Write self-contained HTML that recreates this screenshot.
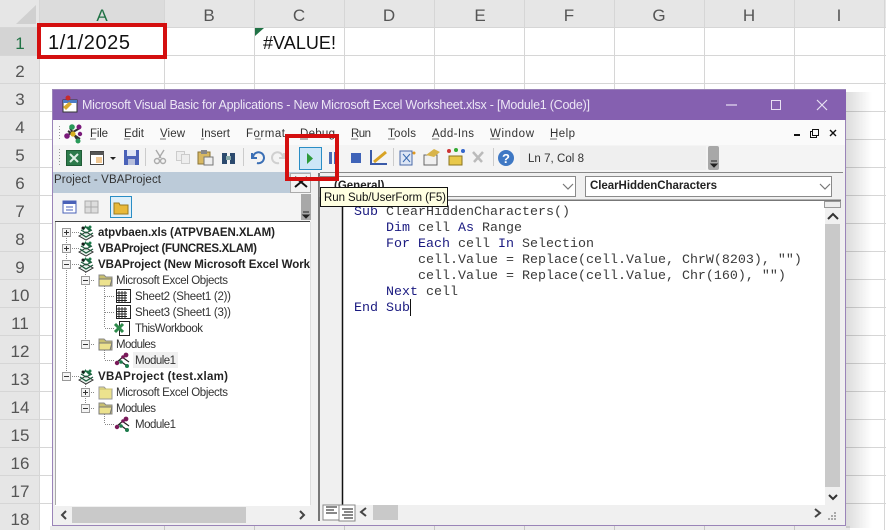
<!DOCTYPE html>
<html><head><meta charset="utf-8"><style>
html,body{margin:0;padding:0;background:#fff;width:886px;height:530px;overflow:hidden}
svg{display:block}
.s{font-family:"Liberation Sans",sans-serif;font-size:11.500px;fill:#333}
.b{font-family:"Liberation Sans",sans-serif;font-size:11.500px;font-weight:bold;fill:#222}
.m{font-family:"Liberation Mono",monospace;font-size:13.33px;fill:#3a3a3a;white-space:pre}
.k{fill:#1a1a80}
.h{font-family:"Liberation Sans",sans-serif;font-size:17px;fill:#555;text-anchor:middle}
</style></head><body>
<svg width="886" height="530" viewBox="0 0 886 530" xmlns="http://www.w3.org/2000/svg">
<defs>
<linearGradient id="sh" x1="0" x2="1" y1="0" y2="0"><stop offset="0" stop-color="#000" stop-opacity=".14"/><stop offset="1" stop-color="#000" stop-opacity="0"/></linearGradient>
<g id="pj"><path d="M1 12l7-4 7 4-7 4z" fill="#e8f2ec" stroke="#333"/><path d="M2 9l6 4 7-4M3 6l5 3 6-3" fill="none" stroke="#1c5a3c" stroke-width="1.200"/><path d="M5 6l3-4M9 3l4 3M7 2l5 5" stroke="#1c6a42" stroke-width="1.500" fill="none"/><circle cx="5" cy="4" r="1.500" fill="#1a1a1a"/><circle cx="12" cy="3" r="1.500" fill="#1c7a4a"/></g>
<g id="mod"><path d="M2 11l8-7M5 8l8 6M8 5l7 5" stroke="#222" stroke-width="1.200" fill="none"/><circle cx="3" cy="11" r="2.200" fill="#7a1a5a"/><circle cx="12" cy="3" r="2.400" fill="#7a1a5a"/><circle cx="9" cy="5" r="1.800" fill="#7a1a5a"/><circle cx="13" cy="14" r="2" fill="#1c7a4a"/><circle cx="7" cy="10" r="1.800" fill="#1c7a4a"/></g>
<g id="fo"><path d="M1 3h5l2 2h6v9H1z" fill="#c9c070" stroke="#888"/><path d="M1 7h13l-2 7H1z" fill="#ece28e" stroke="#777"/></g>
<g id="fc"><path d="M1 3h5l2 2h6v10H1z" fill="#ece28e" stroke="#999"/><path d="M1 5h13" stroke="#c9c070"/></g>
<g id="sh2"><rect x=".5" y=".5" width="14" height="13" fill="#fff" stroke="#222"/><path d="M0 4h11M0 6.500h11M0 9h11M0 11.500h11M3 2v11M6 2v11M9 2v11" stroke="#222" stroke-width=".9"/></g>
<g id="plus"><rect x=".5" y=".5" width="8" height="8" fill="#f4f4f4" stroke="#999"/><path d="M2 4.500h5M4.500 2v5" stroke="#333"/></g>
<g id="minus"><rect x=".5" y=".5" width="8" height="8" fill="#f4f4f4" stroke="#999"/><path d="M2 4.500h5" stroke="#333"/></g>
</defs>

<!-- excel sheet -->
<rect width="886" height="530" fill="#fff"/>
<rect width="886" height="27" fill="#e6e6e6"/>
<rect width="39" height="530" fill="#e6e6e6"/>
<rect x="39" width="125" height="27" fill="#dcdcdc"/>
<rect y="27" width="39" height="28" fill="#d4d4d4"/>
<path d="M16 24L36 5v19z" fill="#d0d0d0"/>
<g stroke="#d6d6d6">
<path d="M39.500 0V530M164.500 0V530M254.500 0V530M344.500 0V530M434.500 0V530M524.500 0V530M614.500 0V530M704.500 0V530M794.500 0V530M884.500 0V530"/>
<path d="M0 27.500H886M0 55.500H886M0 83.500H886M0 111.500H886M0 139.500H886M0 167.500H886M0 195.500H886M0 223.500H886M0 251.500H886M0 279.500H886M0 307.500H886M0 335.500H886M0 363.500H886M0 391.500H886M0 419.500H886M0 447.500H886M0 475.500H886M0 503.500H886"/>
</g>
<g class="h">
<text class="h" x="102" y="21" style="fill:#217346">A</text><text class="h" x="209" y="21">B</text><text class="h" x="299" y="21">C</text><text class="h" x="389" y="21">D</text><text class="h" x="480" y="21">E</text><text class="h" x="569" y="21">F</text><text class="h" x="659" y="21">G</text><text class="h" x="749" y="21">H</text><text class="h" x="839" y="21">I</text>
<text class="h" x="20" y="49" style="fill:#217346">1</text><text class="h" x="20" y="77">2</text><text class="h" x="20" y="105">3</text><text class="h" x="20" y="133">4</text><text class="h" x="20" y="161">5</text><text class="h" x="20" y="189">6</text><text class="h" x="20" y="217">7</text><text class="h" x="20" y="245">8</text><text class="h" x="20" y="273">9</text><text class="h" x="20" y="301">10</text><text class="h" x="20" y="329">11</text><text class="h" x="20" y="357">12</text><text class="h" x="20" y="385">13</text><text class="h" x="20" y="413">14</text><text class="h" x="20" y="441">15</text><text class="h" x="20" y="469">16</text><text class="h" x="20" y="497">17</text><text class="h" x="20" y="525">18</text>
</g>
<rect x="39" y="27" width="125" height="28" fill="#fff"/>
<text x="48" y="49" textLength="82" font-family="Liberation Sans" font-size="20" fill="#111">1/1/2025</text>
<text x="263" y="49" textLength="73" font-family="Liberation Sans" font-size="18" fill="#111">#VALUE!</text>
<path d="M255 28h9l-9 8z" fill="#217346"/>
<rect x="39" y="25" width="126" height="32" fill="none" stroke="#d40f0f" stroke-width="4"/>

<!-- window -->
<rect x="846" y="92" width="26" height="436" fill="url(#sh)"/>
<rect x="50" y="526" width="800" height="4" fill="#000" opacity=".08"/>
<rect x="52.500" y="89.500" width="793" height="436" fill="#f0f0f0" stroke="#9a84b8"/>
<rect x="53" y="90" width="793" height="30" fill="#8560b0"/>
<rect x="63" y="100" width="14" height="12" fill="#fff" stroke="#333"/>
<rect x="63" y="100" width="14" height="3" fill="#4d7cc4"/>
<path d="M63 107l6-5 3 2-6 6z" fill="#d9a92c"/><circle cx="68" cy="98" r="2.500" fill="#c92a2a"/>
<text x="82" y="109" textLength="508" font-family="Liberation Sans" font-size="12.500" fill="#ece6f5">Microsoft Visual Basic for Applications - New Microsoft Excel Worksheet.xlsx - [Module1 (Code)]</text>
<path d="M726 105h11" stroke="#e8e0f2" stroke-width="1.200"/>
<rect x="771.500" y="100.500" width="9" height="9" fill="none" stroke="#e8e0f2"/>
<path d="M817 100l10 10M827 100l-10 10" stroke="#e8e0f2" stroke-width="1.200"/>

<!-- menu -->
<rect x="53" y="120" width="792" height="25" fill="#fafafa"/>
<path d="M59.500 126v13" stroke="#999" stroke-dasharray="1 2"/>
<g stroke-width="2"><path d="M66 136l14-8M70 128l8 13M68 131l12 8" stroke="#333" fill="none"/></g>
<circle cx="67" cy="136" r="2.800" fill="#7a1a7a"/><circle cx="72" cy="127" r="2.800" fill="#2a9a5a"/><circle cx="79" cy="127" r="2.500" fill="#7a1a7a"/><circle cx="73" cy="134" r="2.600" fill="#d8b020"/><circle cx="78" cy="141" r="2.500" fill="#2a9a5a"/><circle cx="80" cy="134" r="2.200" fill="#7a1a7a"/>
<g>
<text class="s" x="90" y="137" textLength="18">File</text><text class="s" x="124" y="137" textLength="20">Edit</text><text class="s" x="160" y="137" textLength="25">View</text><text class="s" x="201" y="137" textLength="29">Insert</text><text class="s" x="246" y="137" textLength="39">Format</text><text class="s" x="300" y="137" textLength="35">Debug</text><text class="s" x="351" y="137" textLength="20">Run</text><text class="s" x="388" y="137" textLength="28">Tools</text><text class="s" x="432" y="137" textLength="42">Add-Ins</text><text class="s" x="490" y="137" textLength="44">Window</text><text class="s" x="550" y="137" textLength="25">Help</text>
</g>
<path d="M90 139h6M124 139h6M160 139h6M201 139h3M255 139h6M300 139h8M351 139h7M388 139h7M432 139h7M490 139h10M550 139h7" stroke="#444" stroke-width=".8"/>
<rect x="794" y="134" width="6" height="2" fill="#111"/>
<rect x="810.500" y="131.500" width="6" height="6" fill="none" stroke="#111"/><rect x="812.500" y="129.500" width="6" height="6" fill="#fafafa" stroke="#111"/>
<path d="M830 130l6 6M836 130l-6 6" stroke="#111" stroke-width="1.400"/>

<!-- toolbar -->
<rect x="53" y="145" width="792" height="27" fill="#f4f4f4"/>
<path d="M59.500 149v17" stroke="#999" stroke-dasharray="1 2"/>
<rect x="66.500" y="150.500" width="15" height="15" fill="#2d7a4b" stroke="#1f5c36"/>
<path d="M70 154l8 8M78 154l-8 8" stroke="#dff0e5" stroke-width="2"/>
<rect x="90.500" y="151.500" width="13" height="13" fill="#fff" stroke="#444"/><rect x="91" y="152" width="13" height="3" fill="#555"/><path d="M96 158h6M96 160h6M96 162h6" stroke="#e0912a"/>
<path d="M110 157h6l-3 3z" fill="#222"/>
<rect x="124" y="150" width="15" height="15" fill="#4a62b8"/><rect x="127" y="150" width="9" height="6" fill="#dfe6f5"/><rect x="128" y="159" width="7" height="6" fill="#b6bedb"/>
<path d="M145.500 148v18M243.500 148v18M288.500 148v18M393.500 148v18M493.500 148v18" stroke="#ccc"/>
<path d="M156 150l5 8M164 150l-5 8" stroke="#aaa" stroke-width="1.400"/><circle cx="157" cy="161" r="2.500" fill="none" stroke="#aaa" stroke-width="1.400"/><circle cx="163" cy="161" r="2.500" fill="none" stroke="#aaa" stroke-width="1.400"/>
<rect x="176.500" y="151.500" width="8" height="9" fill="#eee" stroke="#ccc"/><rect x="181.500" y="154.500" width="8" height="9" fill="#eee" stroke="#ccc"/>
<rect x="198" y="152" width="12" height="12" fill="#d8b862" stroke="#8a7436"/><rect x="201" y="150" width="6" height="4" fill="#888"/><rect x="204" y="157" width="9" height="8" fill="#eee" stroke="#777"/>
<rect x="222" y="153" width="5" height="11" fill="#2c4a6e"/><rect x="230" y="153" width="5" height="11" fill="#2c4a6e"/><rect x="226" y="156" width="5" height="4" fill="#8aa"/>
<path d="M253 158a5.500 5.500 0 1 1 4 5M252 153v5h5" fill="none" stroke="#3b6fb5" stroke-width="2"/>
<path d="M283 158a5.500 5.500 0 1 0-4 5M284 153v5h-5" fill="none" stroke="#d0d0d0" stroke-width="2"/>
<rect x="299.500" y="147.500" width="22" height="22" fill="#cde6f7" stroke="#2a8dc5"/>
<path d="M307 153l6 5.500-6 5.500z" fill="#2d9a3a"/>
<rect x="329" y="152" width="3" height="12" fill="#4a6db5"/><rect x="334" y="152" width="3" height="12" fill="#4a6db5"/>
<rect x="351" y="153" width="10" height="10" fill="#3f63b8"/>
<path d="M371 150v14h16" fill="none" stroke="#3a5aa8" stroke-width="2"/><path d="M374 162l12-10" stroke="#d8a324" stroke-width="3"/>
<rect x="400" y="151" width="12" height="14" fill="#dde6f5" stroke="#4a6aa8"/><path d="M403 154l7 8M410 154l-7 8" stroke="#3a6ab0"/><circle cx="414" cy="153" r="1.500" fill="#e29a20"/>
<rect x="424" y="155" width="13" height="10" fill="#f0f0f0" stroke="#666"/><path d="M426 155l8-6 6 3-6 5z" fill="#d8b44a"/>
<rect x="449" y="156" width="13" height="9" fill="#e8c84a" stroke="#8a7420"/><circle cx="449" cy="151" r="2" fill="#c33"/><circle cx="456" cy="150" r="2" fill="#3a3"/><circle cx="463" cy="151" r="2" fill="#36c"/>
<path d="M473 152l9 10M483 152l-9 10" stroke="#bbb" stroke-width="2.500"/>
<circle cx="506" cy="158" r="8" fill="#3f78c4"/><text x="506" y="163" text-anchor="middle" font-family="Liberation Sans" font-size="13" font-weight="bold" fill="#fff">?</text>
<rect x="520" y="146" width="186" height="24" fill="#efefef"/>
<text x="528" y="162" class="s" textLength="56">Ln 7, Col 8</text>
<rect x="708" y="146" width="11" height="24" rx="2" fill="#a8a8a8"/>
<path d="M711 161h6M711 164h6l-3 3z" stroke="#222" fill="#222"/>
<path d="M53 172.500H843" stroke="#888"/>

<!-- project pane -->
<rect x="53" y="172" width="258" height="21" fill="#bccbd9"/>
<text x="54" y="183" class="s" textLength="107">Project - VBAProject</text>
<rect x="290.500" y="173.500" width="20" height="19" fill="#f2f2f2" stroke="#aaa"/>
<path d="M295 177l12 10M307 177l-12 10" stroke="#111" stroke-width="2"/>
<rect x="53" y="193" width="258" height="28" fill="#f4f4f4"/>
<rect x="63" y="201" width="13" height="12" fill="#fff" stroke="#4a62b8"/><rect x="63" y="201" width="13" height="3" fill="#4a62b8"/><path d="M66 207h7M66 210h7" stroke="#4a62b8"/>
<rect x="85" y="201" width="13" height="12" fill="#ddd" stroke="#aaa"/><path d="M85 207h13M91 201v12" stroke="#aaa"/>
<rect x="110.500" y="196.500" width="21" height="21" fill="#dff0fa" stroke="#2a8dc5"/>
<path d="M114 203h5l1 2h8v9h-14z" fill="#e8b93a" stroke="#9a7a20"/>
<rect x="301" y="194" width="10" height="26" fill="#a8a8a8"/><path d="M303 212h6M303 215h6l-3 3z" stroke="#222" fill="#222"/>
<rect x="55" y="222" width="255" height="284" fill="#fff"/>
<path d="M55 221.500H310" stroke="#444"/>
<path d="M55.500 222V505" stroke="#aaa"/>
<path d="M310.500 222V505" stroke="#ddd"/>

<g stroke="#888" stroke-dasharray="1 1" fill="none">
<path d="M66.500 232V260M66.500 268V372"/>
<path d="M70 232.500h9M70 248.500h9M70 264.500h9M70 376.500h9"/>
<path d="M85.500 268V340M85.500 380V404"/>
<path d="M89 280.500h6M89 344.500h6M89 392.500h6M89 408.500h6"/>
<path d="M104.500 286V328M104.500 350V360M104.500 414V424"/>
<path d="M105 296.500h9M105 312.500h9M105 328.500h9M105 360.500h9M105 424.500h9"/>
</g>
<use href="#plus" x="62" y="228"/><use href="#plus" x="62" y="244"/><use href="#minus" x="62" y="260"/><use href="#minus" x="62" y="372"/>
<use href="#minus" x="81" y="276"/><use href="#minus" x="81" y="340"/><use href="#plus" x="81" y="388"/><use href="#minus" x="81" y="404"/>
<use href="#pj" x="78" y="224"/><use href="#pj" x="78" y="240"/><use href="#pj" x="78" y="256"/><use href="#pj" x="78" y="368"/>
<use href="#fo" x="98" y="272"/><use href="#fo" x="98" y="336"/><use href="#fc" x="98" y="384"/><use href="#fo" x="98" y="400"/>
<use href="#sh2" x="116" y="289"/><use href="#sh2" x="116" y="305"/>
<rect x="119.500" y="321.500" width="10" height="14" fill="#fff" stroke="#222"/><path d="M115 324l8 8M123 324l-8 8" stroke="#2d8a4b" stroke-width="3"/>
<rect x="133" y="352" width="45" height="16" fill="#f0f0f0"/>
<use href="#mod" x="114" y="352"/><use href="#mod" x="114" y="416"/>
<text class="b" x="98" y="236" textLength="177">atpvbaen.xls (ATPVBAEN.XLAM)</text>
<text class="b" x="98" y="252" textLength="159">VBAProject (FUNCRES.XLAM)</text>
<svg x="98" y="255" width="212" height="16"><text class="b" x="0" y="13" textLength="219">VBAProject (New Microsoft Excel Workb</text></svg>
<text class="s" x="116" y="284" textLength="112">Microsoft Excel Objects</text>
<text class="s" x="135" y="300" textLength="96">Sheet2 (Sheet1 (2))</text>
<text class="s" x="135" y="316" textLength="96">Sheet3 (Sheet1 (3))</text>
<text class="s" x="135" y="332" textLength="68">ThisWorkbook</text>
<text class="s" x="116" y="348" textLength="40">Modules</text>
<text class="s" x="135" y="364" textLength="41">Module1</text>
<text class="b" x="98" y="380" textLength="130">VBAProject (test.xlam)</text>
<text class="s" x="116" y="396" textLength="112">Microsoft Excel Objects</text>
<text class="s" x="116" y="412" textLength="40">Modules</text>
<text class="s" x="135" y="428" textLength="41">Module1</text>

<rect x="55" y="507" width="255" height="16" fill="#f0f0f0"/>
<rect x="72" y="507" width="174" height="16" fill="#c9c9c9"/>
<path d="M66 511l-4 4 4 4M300 511l4 4-4 4" fill="none" stroke="#444" stroke-width="2"/>

<!-- splitter & code pane -->
<rect x="311" y="172" width="9" height="353" fill="#f0f0f0"/>
<path d="M319 173V521" stroke="#777" stroke-width="2"/>
<rect x="320" y="173" width="524" height="28" fill="#f0f0f0"/>
<rect x="319.500" y="176.500" width="256" height="20" fill="#fff" stroke="#8a8a8a"/>
<rect x="585.500" y="176.500" width="246" height="20" fill="#fff" stroke="#8a8a8a"/>
<path d="M563 184l5 5 5-5M820 184l5 5 5-5" fill="none" stroke="#777" stroke-width="1.200"/>
<text x="590" y="189" textLength="127" font-family="Liberation Sans" font-size="11.500" font-weight="bold" fill="#222">ClearHiddenCharacters</text>
<text x="334" y="189" font-family="Liberation Sans" font-size="11.500" font-weight="bold" fill="#222">(General)</text>
<path d="M320 200.500H841" stroke="#777" stroke-width="2"/>
<rect x="320" y="201" width="23" height="303" fill="#f0f0f0"/>
<rect x="343" y="201" width="483" height="304" fill="#fff"/>
<path d="M342.500 201V505" stroke="#111" stroke-width="1.500"/>
<rect x="825" y="201" width="16" height="304" fill="#f0f0f0"/>
<rect x="824.500" y="201.500" width="16" height="6" fill="#ececec" stroke="#999"/>
<path d="M828 219l5-5 5 5" fill="none" stroke="#333" stroke-width="2"/>
<rect x="825" y="224" width="15" height="263" fill="#c9c9c9"/>
<path d="M829 495l4 4 4-4" fill="none" stroke="#333" stroke-width="2"/>

<g>
<text class="m" x="354" y="215"><tspan class="k">Sub</tspan> ClearHiddenCharacters()</text>
<text class="m" x="386" y="231"><tspan class="k">Dim</tspan> cell <tspan class="k">As</tspan> Range</text>
<text class="m" x="386" y="247"><tspan class="k">For Each</tspan> cell <tspan class="k">In</tspan> Selection</text>
<text class="m" x="418" y="263">cell.Value = Replace(cell.Value, ChrW(8203), "")</text>
<text class="m" x="418" y="279">cell.Value = Replace(cell.Value, Chr(160), "")</text>
<text class="m" x="386" y="295"><tspan class="k">Next</tspan> cell</text>
<text class="m" x="354" y="311"><tspan class="k">End Sub</tspan></text>
</g>
<path d="M410.500 299V316" stroke="#111"/>

<rect x="320.500" y="187.500" width="127" height="19" fill="#ffffe1" stroke="#111"/>
<text class="s" x="324" y="201" textLength="122" style="fill:#111">Run Sub/UserForm (F5)</text>

<rect x="320" y="505" width="524" height="18" fill="#f0f0f0"/>
<rect x="373" y="505" width="25" height="15" fill="#c9c9c9"/>
<rect x="323" y="505" width="16" height="15" fill="#fff" stroke="#888"/>
<rect x="339" y="505" width="16" height="16" fill="#fff" stroke="#888"/>
<path d="M326 508h11M326 511h8M326 514h11" stroke="#111" transform="translate(0 -1)"/>
<path d="M342 509h11M344 512h9M342 515h11M344 518h9" stroke="#111"/>
<path d="M366 508l-5 4 5 4M815 509l5 4-5 4" fill="none" stroke="#444" stroke-width="2"/>
<g fill="#aaa"><rect x="834" y="512" width="2" height="2"/><rect x="831" y="515" width="2" height="2"/><rect x="834" y="515" width="2" height="2"/><rect x="828" y="518" width="2" height="2"/><rect x="831" y="518" width="2" height="2"/><rect x="834" y="518" width="2" height="2"/></g>

<rect x="287" y="136" width="50" height="43" fill="none" stroke="#d40f0f" stroke-width="4"/>
</svg>
</body></html>
